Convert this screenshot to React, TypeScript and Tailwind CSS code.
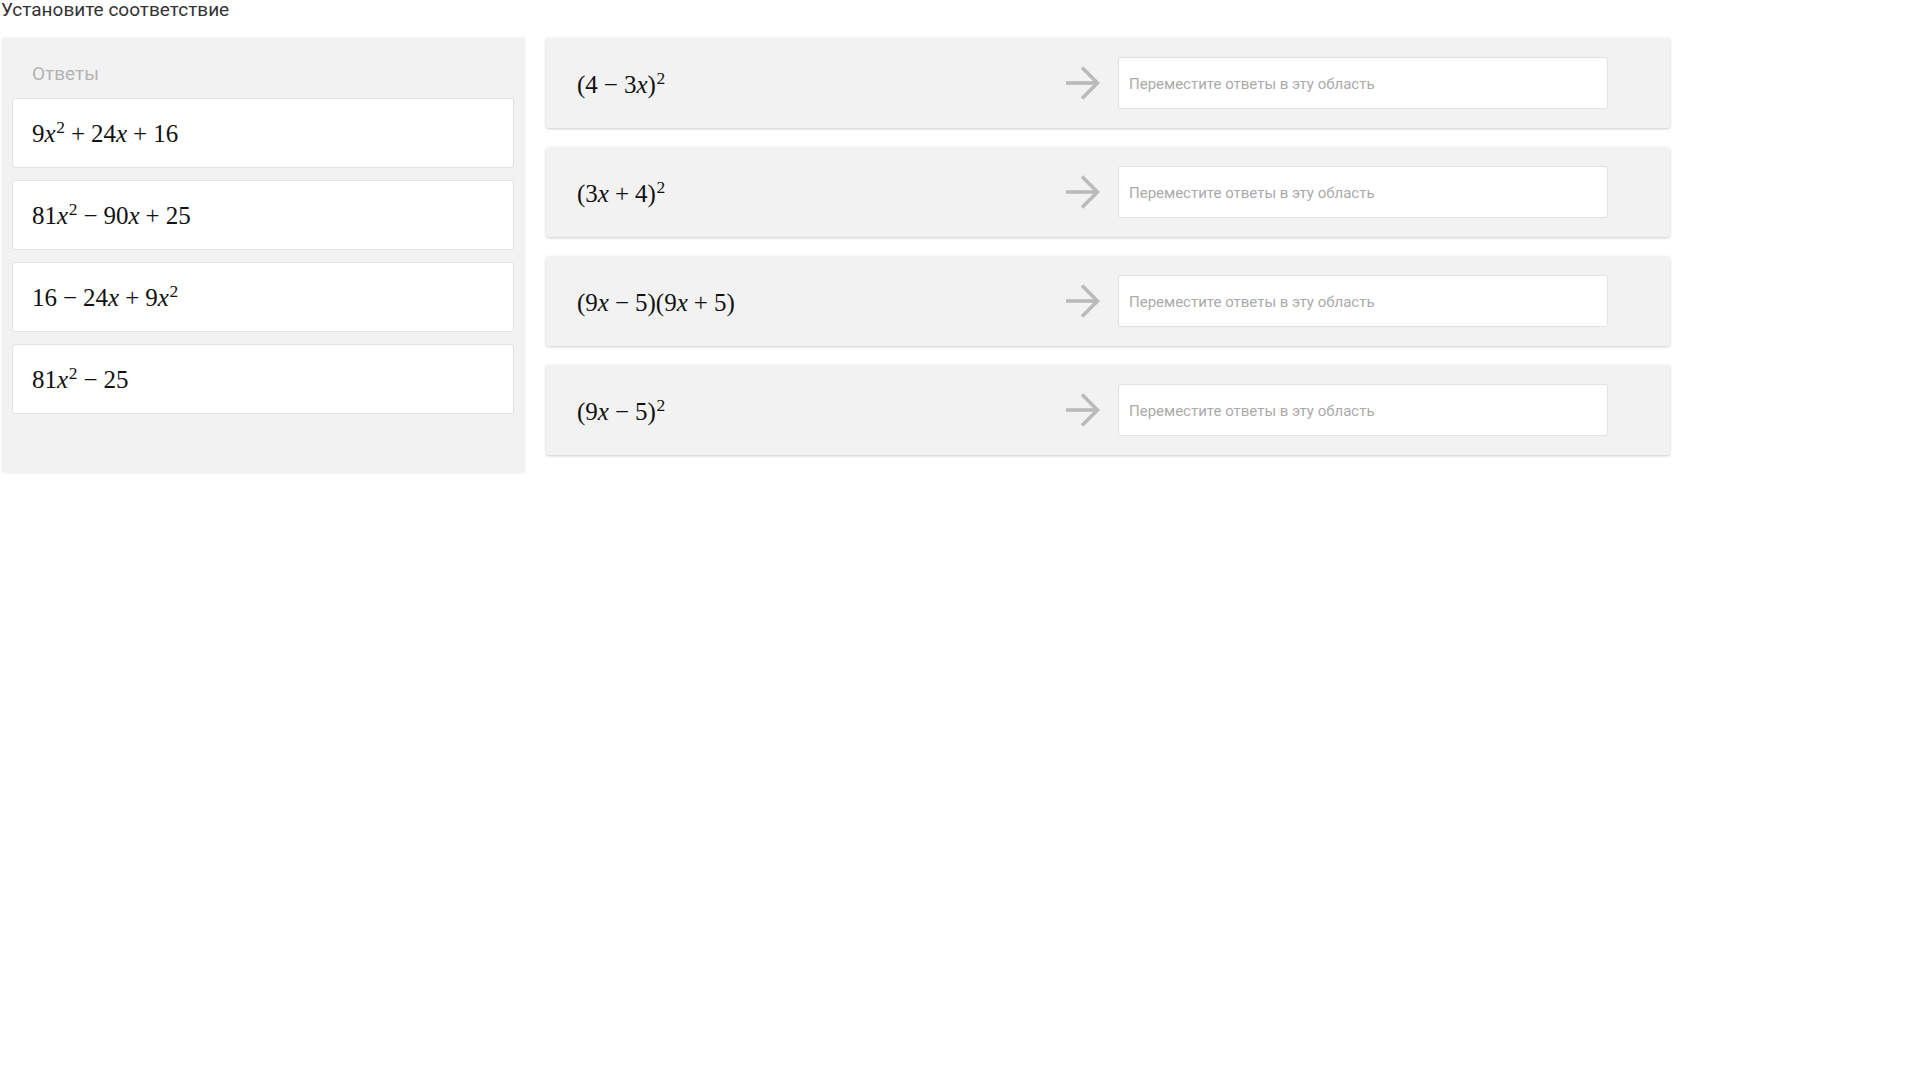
import React from "react";

const N = ({ children }: { children: React.ReactNode }) => <span>{children}</span>;
const X = () => <span className="italic">x</span>;
const Op = ({ children }: { children: React.ReactNode }) => (
  <span className="mx-[0.24em]">{children}</span>
);
const Sup = ({ children }: { children: React.ReactNode }) => (
  <span className="relative top-[-0.48em] ml-[0.03em] text-[0.7em]">{children}</span>
);

const MathText = ({ children }: { children: React.ReactNode }) => (
  <span className="whitespace-nowrap font-['Liberation_Serif',serif] text-[25px] leading-none text-[#111]">
    {children}
  </span>
);

const answers: React.ReactNode[] = [
  <MathText key="a1">
    <N>9</N>
    <X />
    <Sup>2</Sup>
    <Op>+</Op>
    <N>24</N>
    <X />
    <Op>+</Op>
    <N>16</N>
  </MathText>,
  <MathText key="a2">
    <N>81</N>
    <X />
    <Sup>2</Sup>
    <Op>−</Op>
    <N>90</N>
    <X />
    <Op>+</Op>
    <N>25</N>
  </MathText>,
  <MathText key="a3">
    <N>16</N>
    <Op>−</Op>
    <N>24</N>
    <X />
    <Op>+</Op>
    <N>9</N>
    <X />
    <Sup>2</Sup>
  </MathText>,
  <MathText key="a4">
    <N>81</N>
    <X />
    <Sup>2</Sup>
    <Op>−</Op>
    <N>25</N>
  </MathText>,
];

const questions: React.ReactNode[] = [
  <MathText key="q1">
    <N>(4</N>
    <Op>−</Op>
    <N>3</N>
    <X />
    <N>)</N>
    <Sup>2</Sup>
  </MathText>,
  <MathText key="q2">
    <N>(3</N>
    <X />
    <Op>+</Op>
    <N>4)</N>
    <Sup>2</Sup>
  </MathText>,
  <MathText key="q3">
    <N>(9</N>
    <X />
    <Op>−</Op>
    <N>5)(9</N>
    <X />
    <Op>+</Op>
    <N>5)</N>
  </MathText>,
  <MathText key="q4">
    <N>(9</N>
    <X />
    <Op>−</Op>
    <N>5)</N>
    <Sup>2</Sup>
  </MathText>,
];

const Arrow = () => (
  <svg width="34" height="34" viewBox="0 0 34 34" fill="none" stroke="#bababa" strokeWidth="3.6">
    <line x1="0" y1="17" x2="31" y2="17" />
    <polyline points="16,1.5 31.5,17 16,32.5" strokeLinejoin="miter" />
  </svg>
);

export default function App() {
  return (
    <div className="min-h-screen bg-white font-['Roboto',sans-serif]">
      <div className="pl-[1px] text-[19px] leading-[19px] text-[#333]">Установите соответствие</div>
      <div className="mt-[19px] flex items-start gap-[21px] pl-[2px]">
        <div className="flex h-[435px] w-[523px] flex-col rounded-[3px] bg-[#f2f2f2] pl-[10px] pr-[11px] pt-[25px] shadow-[0_0_2px_rgba(0,0,0,0.12)]">
          <div className="mb-[14px] pl-[20px] text-[19px] leading-[21px] text-[#b3b3b3]">Ответы</div>
          <div className="flex flex-col gap-[12px]">
            {answers.map((a, i) => (
              <div
                key={i}
                className="flex h-[70px] items-center rounded-[3px] border border-[#e2e2e2] bg-white pl-[19px]"
              >
                {a}
              </div>
            ))}
          </div>
        </div>
        <div className="flex w-[1124px] flex-col gap-[19px]">
          {questions.map((q, i) => (
            <div
              key={i}
              className="flex h-[90px] items-center rounded-[3px] bg-[#f2f2f2] pl-[31px] pr-[62px] shadow-[0_1px_3px_rgba(0,0,0,0.2)]"
            >
              <div className="flex-1 pt-[5px]">{q}</div>
              <div className="mr-[18px] flex items-center">
                <Arrow />
              </div>
              <div className="flex h-[52px] w-[490px] items-center rounded-[3px] border border-[#e2e2e2] bg-white pl-[10px] pt-[3px] text-[15px] text-[#aaaaaa]">
                Переместите ответы в эту область
              </div>
            </div>
          ))}
        </div>
      </div>
    </div>
  );
}
